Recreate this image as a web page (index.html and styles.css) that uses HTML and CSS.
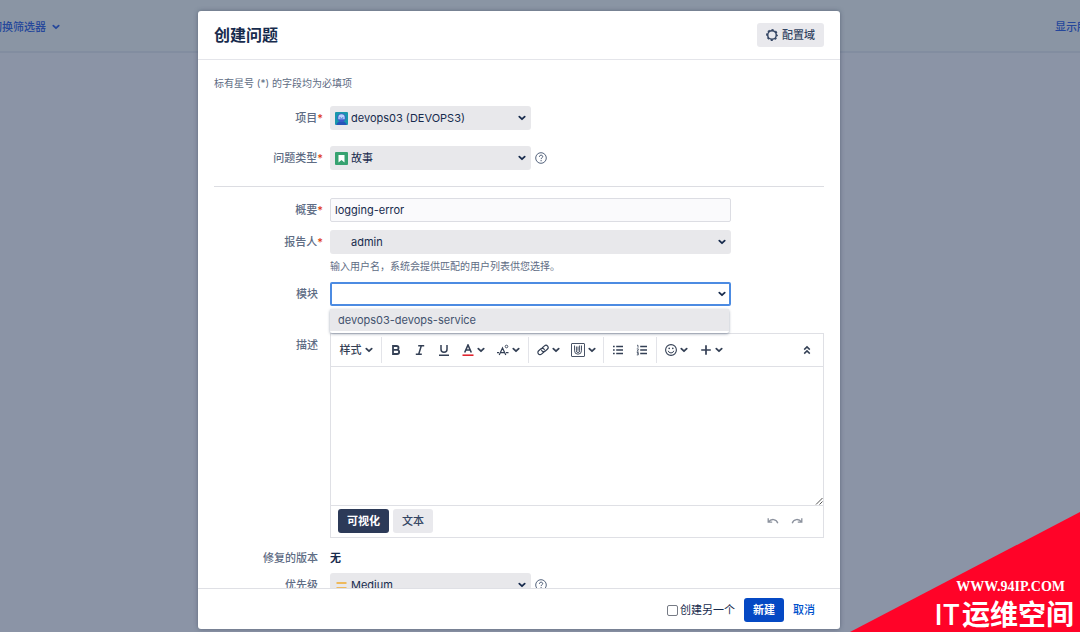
FILE: index.html
```html
<!DOCTYPE html>
<html lang="zh-CN">
<head>
<meta charset="utf-8">
<title>创建问题</title>
<link rel="stylesheet" href="styles.css">
</head>
<body>
<svg class="sprite" aria-hidden="true">
  <symbol id="chevron" viewBox="0 0 8 8"><path d="M1.3 2.7 4 5.2l2.7-2.5" fill="none" stroke="currentColor" stroke-width="1.8" stroke-linecap="round" stroke-linejoin="round"/></symbol>
  <symbol id="help" viewBox="0 0 12 12"><circle cx="6" cy="6" r="5.3" fill="none" stroke="currentColor" stroke-width=".9"/><path d="M4.400 4.800c0-2.200 3.300-2.100 3.300-.2 0 1.200-1.600 1.200-1.600 2.500" fill="none" stroke="currentColor"/><circle cx="6.100" cy="8.700" r=".6" fill="currentColor"/></symbol>
</svg>

<header class="page-bar">
  <a class="page-link" href="#">切换筛选器 <svg class="chev"><use href="#chevron"/></svg></a>
  <a class="page-link page-link-end" href="#">显示所有</a>
</header>

<main class="stage">
<form class="dialog" role="dialog" aria-labelledby="dialog-title">
  <header class="dialog-head">
    <h1 id="dialog-title">创建问题</h1>
    <button type="button" class="btn">
      <svg class="icon" viewBox="0 0 12 12"><circle cx="6" cy="6" r="4.300" fill="none" stroke="currentColor" stroke-width="1.500"/><circle cx="6" cy="6" r="5.200" fill="none" stroke="currentColor" stroke-width="1.400" stroke-dasharray="2.200 1.884" stroke-dashoffset="1.100"/></svg>
      配置域
    </button>
  </header>

  <div class="dialog-body">
    <p class="intro">标有星号 (*) 的字段均为必填项</p>

    <div class="row row-wide">
      <label for="project">项目<span class="req">*</span></label>
      <div class="field">
        <div class="select short">
          <svg class="lead" viewBox="0 0 13 13"><rect width="13" height="13" rx="1" fill="#1897ad"/><path d="M1.500 13c0-2 1.500-3.200 3-3.600h4c1.500.4 3 1.600 3 3.600z" fill="#2554b8"/><circle cx="6.500" cy="5.800" r="4.200" fill="#3c58cb"/><path d="M3.300 5.400a3.200 3.200 0 0 1 6.400 0v1.800H3.300z" fill="#b9d5fa"/><path d="M4.700 6.700V5h1v1h1.600V5h1v1.700z" fill="#5f7ddb"/></svg>
          <select id="project"><option>devops03 (DEVOPS3)</option></select>
          <svg class="chev"><use href="#chevron"/></svg>
        </div>
      </div>
    </div>

    <div class="row row-wide">
      <label for="type">问题类型<span class="req">*</span></label>
      <div class="field">
        <div class="select short">
          <svg class="lead" viewBox="0 0 13 13"><rect width="13" height="13" rx="1" fill="#36a270"/><path d="M3.500 3h6v7.500l-3-2.600-3 2.600z" fill="#fff"/></svg>
          <select id="type"><option>故事</option></select>
          <svg class="chev"><use href="#chevron"/></svg>
        </div>
        <svg class="icon help"><use href="#help"/></svg>
      </div>
    </div>

    <hr>

    <div class="row">
      <label for="summary">概要<span class="req">*</span></label>
      <div class="field"><input class="text" id="summary" type="text" value="logging-error"></div>
    </div>

    <div class="row">
      <label for="reporter">报告人<span class="req">*</span></label>
      <div class="field">
        <div class="select">
          <select id="reporter"><option>admin</option></select>
          <svg class="chev"><use href="#chevron"/></svg>
        </div>
      </div>
      <p class="hint">输入用户名，系统会提供匹配的用户列表供您选择。</p>
    </div>

    <div class="row row-combo">
      <label for="component">模块</label>
      <div class="field">
        <div class="select">
          <input class="text focused" id="component" type="text" role="combobox" aria-expanded="true" aria-controls="component-list">
          <svg class="chev"><use href="#chevron"/></svg>
          <ul class="menu" id="component-list" role="listbox">
            <li role="option" aria-selected="true">devops03-devops-service</li>
          </ul>
        </div>
      </div>
    </div>

    <div class="row">
      <label for="description">描述</label>
      <div class="editor">
        <div class="toolbar">
          <div class="group">
            <button type="button" class="tool tool-style">样式<svg class="chev"><use href="#chevron"/></svg></button>
          </div>
          <div class="group">
            <button type="button" class="tool" aria-label="粗体"><svg class="icon" viewBox="0 0 12 12"><path d="M3 2h3.600a1.900 1.900 0 0 1 0 3.900H3zM3 5.900h4.100a2 2 0 0 1 0 4.100H3z" fill="none" stroke="currentColor" stroke-width="1.800"/></svg></button>
            <button type="button" class="tool" aria-label="斜体"><svg class="icon" viewBox="0 0 12 12"><path d="M4.200 1.800h6M1.800 10.200h6M7.300 1.800l-2.600 8.400" fill="none" stroke="currentColor" stroke-width="1.500"/></svg></button>
            <button type="button" class="tool" aria-label="下划线"><svg class="icon" viewBox="0 0 12 12"><path d="M3 1v4.300a3 3 0 0 0 6 0V1M1 11.200h10" fill="none" stroke="currentColor" stroke-width="1.500"/></svg></button>
            <button type="button" class="tool tool-drop" aria-label="文字颜色"><svg class="icon" viewBox="0 0 12 12"><path d="M2.700 8.500 6 1l3.300 7.500M3.900 6h4.200" fill="none" stroke="currentColor" stroke-width="1.600"/><path d="M.5 11.200h11" stroke="#e0252f" stroke-width="1.600"/></svg><svg class="chev"><use href="#chevron"/></svg></button>
            <button type="button" class="tool tool-drop" aria-label="更多格式"><svg class="icon" viewBox="0 0 12 12"><path d="M2.200 11 5.500 4l3.300 7M3.500 8.700h4M0 8.700h2M9 8.700h2.500" fill="none" stroke="currentColor" stroke-width="1.200"/><circle cx="9.500" cy="2.500" r="1.300" fill="none" stroke="currentColor" stroke-width=".9"/></svg><svg class="chev"><use href="#chevron"/></svg></button>
          </div>
          <div class="group">
            <button type="button" class="tool tool-drop" aria-label="链接"><svg class="icon" viewBox="0 0 12 12"><g transform="rotate(-40 6 6)" fill="none" stroke="currentColor" stroke-width="1.200" stroke-linecap="round"><path d="M5 8.200H2.200a2.200 2.200 0 0 1 0-4.400h3a2.200 2.200 0 0 1 2 3"/><path d="M7 3.800h2.800a2.200 2.200 0 0 1 0 4.400h-3a2.200 2.200 0 0 1-2-3"/></g></svg><svg class="chev"><use href="#chevron"/></svg></button>
            <button type="button" class="tool tool-drop" aria-label="附件"><svg class="icon icon-clip" viewBox="0 0 14 14"><rect x=".5" y=".5" width="13" height="13" rx=".5" fill="none" stroke="currentColor" stroke-width=".9"/><path d="M3.500 2.500v5.200a3.500 3.500 0 0 0 7 0V2.500M8.600 2.500v5.400a1.600 1.600 0 0 1-3.200 0V3.500M7 3.500v4.300" fill="none" stroke="currentColor" stroke-width=".9"/></svg><svg class="chev"><use href="#chevron"/></svg></button>
          </div>
          <div class="group">
            <button type="button" class="tool" aria-label="项目符号列表"><svg class="icon" viewBox="0 0 12 12"><path d="M1 2.500h1.700M1 6h1.700M1 9.500h1.700M4.200 2.500H11M4.200 6H11M4.200 9.500H11" stroke="currentColor" stroke-width="1.400"/></svg></button>
            <button type="button" class="tool" aria-label="编号列表"><svg class="icon" viewBox="0 0 12 12"><path d="M4.200 2.500H11M4.200 6H11M4.200 9.500H11" stroke="currentColor" stroke-width="1.400"/><path d="M1 1.300h1v2.400M.8 4.900h1.500v1L1 7.200h1.500M.8 8.500h1.500v2.400H.8M1.200 9.700h1" fill="none" stroke="currentColor" stroke-width=".8"/></svg></button>
          </div>
          <div class="group group-last">
            <button type="button" class="tool tool-drop" aria-label="表情"><svg class="icon" viewBox="0 0 12 12"><circle cx="6" cy="6" r="5.400" fill="none" stroke="currentColor" stroke-width="1.100"/><path d="M3.200 6.800a2.900 2.900 0 0 0 5.600 0" fill="none" stroke="currentColor"/><circle cx="4.200" cy="4.400" r=".8" fill="currentColor"/><circle cx="7.800" cy="4.400" r=".8" fill="currentColor"/></svg><svg class="chev"><use href="#chevron"/></svg></button>
            <button type="button" class="tool tool-drop" aria-label="插入"><svg class="icon" viewBox="0 0 12 12"><path d="M6 1.200v9.600M1.200 6h9.600" stroke="currentColor" stroke-width="1.700"/></svg><svg class="chev"><use href="#chevron"/></svg></button>
          </div>
          <button type="button" class="tool tool-end" aria-label="收起"><svg class="icon" viewBox="0 0 12 12"><path d="M3.200 5.600 6 2.900l2.800 2.700M3.200 9.600 6 6.900l2.800 2.700" fill="none" stroke="currentColor" stroke-width="1.500"/></svg></button>
        </div>
        <div class="canvas">
          <textarea id="description"></textarea>
          <svg class="grip" viewBox="0 0 8 8"><path d="M1 7.500 7.500 1M4.500 7.500l3-3" stroke="#555" fill="none"/></svg>
        </div>
        <div class="editor-foot">
          <button type="button" class="btn btn-dark">可视化</button>
          <button type="button" class="btn">文本</button>
          <button type="button" class="tool tool-undo" aria-label="撤销"><svg class="icon" viewBox="0 0 12 12"><path d="M1.200 3.200v4h4M1.600 6.900C4 3.500 9.500 3.600 10.800 8.200" fill="none" stroke="currentColor" stroke-width="1.300"/></svg></button>
          <button type="button" class="tool tool-redo" aria-label="重做"><svg class="icon" viewBox="0 0 12 12"><path d="M10.800 3.200v4h-4M10.400 6.900C8 3.500 2.500 3.600 1.200 8.200" fill="none" stroke="currentColor" stroke-width="1.300"/></svg></button>
        </div>
      </div>
    </div>

    <div class="row row-tight">
      <span class="row-label">修复的版本</span>
      <div class="field value">无</div>
    </div>

    <div class="row">
      <label for="priority">优先级</label>
      <div class="field">
        <div class="select short">
          <svg class="lead" viewBox="0 0 13 13"><path d="M1.500 4h10M1.500 9h10" stroke="#f0a92e" stroke-width="1.600"/></svg>
          <select id="priority"><option>Medium</option></select>
          <svg class="chev"><use href="#chevron"/></svg>
        </div>
        <svg class="icon help"><use href="#help"/></svg>
      </div>
    </div>
  </div>

  <footer class="dialog-foot">
    <label class="check"><input type="checkbox">创建另一个</label>
    <button type="submit" class="btn btn-primary">新建</button>
    <a class="cancel" href="#">取消</a>
  </footer>
</form>
</main>

<aside class="mark">
  <span class="mark-url">WWW.94IP.COM</span>
  <span class="mark-name"><span class="mark-latin">IT</span>运维空间</span>
</aside>
</body>
</html>
```
FILE: styles.css
```css
* { box-sizing: border-box; }

body {
  margin: 0;
  height: 100vh;
  overflow: hidden;
  background: #8b94a6;
  color: #172b4d;
  font: 11px/16px Inter, "Noto Sans CJK SC", sans-serif;
}

button, input, select, textarea { font: inherit; color: inherit; margin: 0; }
a { color: #0052cc; text-decoration: none; }
p, h1, ul { margin: 0; padding: 0; }
.sprite { position: absolute; width: 0; height: 0; }
.icon { width: 12px; height: 12px; flex: none; }
.icon-clip { width: 14px; height: 14px; }
.help { color: #42526e; }
.chev { width: 8px; height: 8px; flex: none; }

.page-bar {
  position: absolute;
  inset: 0 0 auto;
  display: flex;
  justify-content: space-between;
  align-items: center;
  height: 53px;
  padding-top: 3px;
  overflow: hidden;
  background: #8a95a4;
  border-bottom: 2px solid #828da0;
}
.page-link { display: flex; align-items: center; gap: 6px; margin-left: -9px; color: #25479b; font-weight: 500; white-space: nowrap; }
.page-link-end { margin-right: -19px; }

.stage {
  position: relative;
  height: 100%;
  padding: 11px 240px 3px 198px;
}
.dialog {
  display: flex;
  flex-direction: column;
  height: 100%;
  background: #fff;
  border-radius: 3px;
  box-shadow: 0 0 4px rgba(50, 62, 85, .5);
}
.dialog-head {
  display: flex;
  align-items: center;
  justify-content: space-between;
  padding: 12px 16px;
  border-bottom: 1px solid #e4e5ea;
}
.dialog-head h1 { font-size: 16px; line-height: 24px; font-weight: 600; }

.btn {
  display: inline-flex;
  align-items: center;
  gap: 4px;
  height: 24px;
  padding: 0 9px;
  border: 0;
  border-radius: 3px;
  background: #e9e9ed;
  color: #344563;
  font-weight: 500;
}
.btn-dark { background: #2c3a58; color: #fff; font-weight: 600; }
.btn-primary { background: #0549c4; color: #fff; font-weight: 700; }

.dialog-body {
  flex: 1;
  min-height: 0;
  padding: 15px 16px 0;
  overflow-y: auto;
  scrollbar-width: none;
}
.intro, .hint { font-size: 10px; color: #5e6c84; }
.intro { margin-bottom: 15px; }

.row {
  display: grid;
  grid-template-columns: 104px minmax(0, 1fr);
  column-gap: 12px;
  margin-bottom: 8px;
}
.row-wide { margin-bottom: 16px; }
.row-combo { margin-bottom: 27px; }
.row-tight { margin-bottom: 3px; }
.row > label, .row-label { line-height: 24px; text-align: right; color: #5e6c84; font-weight: 500; white-space: nowrap; }
.req { margin-right: -5px; color: #de350b; }
.field { display: flex; align-items: center; gap: 4px; min-height: 24px; }
.hint { grid-column: 2; margin-top: 4px; }
hr { margin: 0 0 11px; border: 0; border-top: 1px solid #dcdde2; }

.select { position: relative; width: 401px; }
.select.short { width: 201px; }
.select select {
  display: block;
  width: 100%;
  height: 24px;
  padding: 0 24px 0 21px;
  appearance: none;
  border: 0;
  border-radius: 3px;
  background: #e8e8eb;
}
.select .chev { position: absolute; top: 8px; right: 5px; pointer-events: none; }
.lead { position: absolute; top: 6px; left: 5px; width: 13px; height: 13px; }

.text {
  display: block;
  width: 401px;
  height: 24px;
  padding: 0 4px;
  border: 1px solid #dcdde3;
  border-radius: 2px;
  outline: 0;
  background: #fafafc;
}
.text.focused { border: 2px solid #4c8be2; background: #fff; }
.menu {
  position: absolute;
  z-index: 1;
  top: 27px;
  left: 0;
  right: 2px;
  padding-bottom: 2px;
  background: #fff;
  border-radius: 2px;
  box-shadow: 0 1px 3px rgba(9, 30, 66, .4);
  list-style: none;
}
.menu li { padding: 2px 8px; background: #e8e8eb; color: #42526e; line-height: 18px; }

.editor { border: 1px solid #dfe0e5; }
.toolbar { display: flex; align-items: center; height: 33px; border-bottom: 1px solid #dfe0e5; }
.group { display: flex; padding: 0 2px; border-right: 1px solid #e3e4e9; }
.group-last { border-right: 0; }
.tool {
  display: flex;
  align-items: center;
  justify-content: center;
  gap: 3px;
  width: 24px;
  height: 26px;
  padding: 0;
  border: 0;
  background: none;
  color: #344055;
}
.tool-style { width: 46px; font-weight: 500; }
.tool-drop { width: 35px; }
.tool-end { margin: 0 4px 0 auto; }
.canvas { position: relative; }
.canvas textarea { display: block; width: 100%; height: 138px; padding: 8px; border: 0; outline: 0; resize: none; background: #fff; }
.grip { position: absolute; right: 0; bottom: 0; width: 8px; height: 8px; }
.editor-foot { display: flex; align-items: center; gap: 4px; padding: 3px 14px 4px 7px; border-top: 1px solid #dfe0e5; }
.tool-undo, .tool-redo { height: 24px; width: 20px; color: #8b919d; }
.tool-undo { margin-left: auto; }
.tool-redo { margin-right: 2px; }
.value { font-weight: 600; }

.dialog-foot {
  display: flex;
  align-items: center;
  justify-content: flex-end;
  gap: 9px;
  padding: 9px 25px 7px;
  border-top: 1px solid #dfe0e5;
}
.check { display: flex; align-items: center; gap: 2px; }
.cancel { font-weight: 500; }
.check input { appearance: none; width: 11px; height: 11px; border: 1px solid #767b85; border-radius: 2px; background: #fff; }

.mark {
  position: absolute;
  right: 0;
  bottom: 0;
  display: flex;
  flex-direction: column;
  align-items: flex-end;
  justify-content: flex-end;
  width: 230px;
  height: 120px;
  clip-path: polygon(0 100%, 100% 0, 100% 100%);
  background: #ff0328;
  color: #fff;
  font-weight: 700;
}
.mark-url { padding-right: 15px; font: 700 14px/14px "Liberation Serif", serif; }
.mark-name { padding-right: 6px; font-family: "Noto Sans CJK SC", sans-serif; font-size: 28px; line-height: 38px; }
.mark-latin { padding-right: 2px; font-weight: 500; }
```
